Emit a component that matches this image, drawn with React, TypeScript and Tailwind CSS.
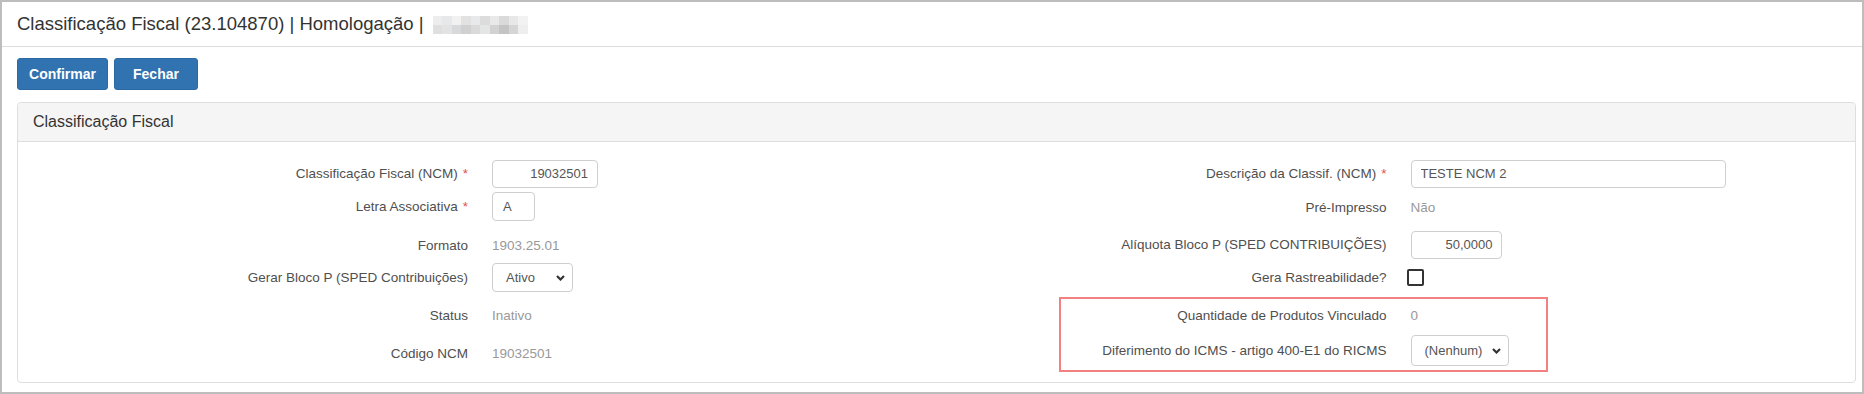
import { ReactNode } from 'react';

const blurTop = ['bg-[#ededed]', 'bg-[#e6e8e9]', 'bg-[#f1f1f1]', 'bg-[#e2e2e2]', 'bg-[#e7e9ea]', 'bg-[#dcdcdc]', 'bg-[#e9e9e9]', 'bg-[#dadada]', 'bg-[#e8e8e8]', 'bg-[#f2f2f2]'];
const blurBottom = ['bg-[#dfdfdf]', 'bg-[#e3e3e3]', 'bg-[#d7d9da]', 'bg-[#d0d0d0]', 'bg-[#dadada]', 'bg-[#e4e6e6]', 'bg-[#d2d2d2]', 'bg-[#c4c4c4]', 'bg-[#d5d5d5]', 'bg-[#eeeeee]'];

const Chevron = () => (
  <svg width="9" height="6" viewBox="0 0 9 6" className="pointer-events-none absolute right-[8px] top-1/2 -translate-y-1/2">
    <path d="M1 1l3.5 3.5L8 1" fill="none" stroke="#333" strokeWidth="2.2" />
  </svg>
);

const Req = () => <span className="ml-[5px] text-[#e0514d]">*</span>;

const Row = ({ label, children, cls }: { label: ReactNode; children: ReactNode; cls: string }) => (
  <div className={`flex items-center ${cls}`}>
    <div className="mt-[2px] w-[450px] shrink-0 text-right text-[13.5px] text-[#4f4f4f]">{label}</div>
    <div className="flex items-center pl-[24px]">{children}</div>
  </div>
);

const Value = ({ children }: { children: ReactNode }) => (
  <span className="mt-[2px] text-[13.5px] text-[#999]">{children}</span>
);

const Input = ({ value, cls }: { value: string; cls: string }) => (
  <input
    readOnly
    value={value}
    className={`rounded-[4px] border border-[#cfcfcf] bg-white text-[13px] text-[#555] outline-none ${cls}`}
  />
);

const Select = ({ value, cls }: { value: string; cls: string }) => (
  <div className="relative">
    <select
      defaultValue={value}
      className={`appearance-none rounded-[4px] border border-[#cfcfcf] bg-white pl-[13px] text-[13px] text-[#555] outline-none ${cls}`}
    >
      <option>{value}</option>
    </select>
    <Chevron />
  </div>
);

export default function App() {
  return (
    <div className="h-[394px] w-[1864px] overflow-hidden border-2 border-[#bdbdbd] bg-white font-['Liberation_Sans',Arial,sans-serif]">
      <div className="flex h-[45px] items-center border-b border-[#dcdcdc] pl-[15px]">
        <span className="text-[18.5px] text-[#333]">Classificação Fiscal (23.104870) | Homologação |</span>
        <div className="ml-[9px] mt-[1px] flex flex-col">
          <div className="flex">
            {blurTop.map((c, i) => (
              <div key={i} className={`h-[9px] w-[9.5px] ${c}`} />
            ))}
          </div>
          <div className="flex">
            {blurBottom.map((c, i) => (
              <div key={i} className={`h-[9px] w-[9.5px] ${c}`} />
            ))}
          </div>
        </div>
      </div>

      <div className="pl-[15px] pr-[6px]">
        <div className="mt-[11px] flex gap-[6px]">
          <button className="h-[32px] w-[91px] rounded-[3px] border border-[#2d6aa3] bg-[#3172b0] text-[14px] font-bold text-white">
            Confirmar
          </button>
          <button className="h-[32px] w-[84px] rounded-[3px] border border-[#2d6aa3] bg-[#3172b0] text-[14px] font-bold text-white">
            Fechar
          </button>
        </div>

        <div className="mt-[12px] h-[281px] rounded-[4px] border border-[#dcdfe2]">
          <div className="flex h-[39px] items-center rounded-t-[4px] border-b border-[#dcdfe2] bg-[#f5f5f5] pl-[15px] text-[16px] text-[#333]">
            Classificação Fiscal
          </div>

          <div className="grid grid-cols-2 pt-[17px]">
            <div className="flex flex-col">
              <Row label={<>Classificação Fiscal (NCM)<Req /></>} cls="h-[29px]">
                <Input value="19032501" cls="h-[28px] w-[106px] pr-[9px] text-right" />
              </Row>
              <Row label={<>Letra Associativa<Req /></>} cls="mt-[4px] h-[29px]">
                <Input value="A" cls="h-[29px] w-[43px] pl-[10px]" />
              </Row>
              <Row label="Formato" cls="mt-[10px] h-[29px]">
                <Value>1903.25.01</Value>
              </Row>
              <Row label="Gerar Bloco P (SPED Contribuições)" cls="mt-[3px] h-[29px]">
                <Select value="Ativo" cls="h-[29px] w-[81px]" />
              </Row>
              <Row label="Status" cls="mt-[9px] h-[29px]">
                <Value>Inativo</Value>
              </Row>
              <Row label="Código NCM" cls="mt-[9px] h-[29px]">
                <Value>19032501</Value>
              </Row>
            </div>

            <div className="flex flex-col">
              <Row label={<>Descrição da Classif. (NCM)<Req /></>} cls="h-[29px]">
                <Input value="TESTE NCM 2" cls="h-[28px] w-[315px] pl-[9px]" />
              </Row>
              <Row label="Pré-Impresso" cls="mt-[5px] h-[29px]">
                <Value>Não</Value>
              </Row>
              <Row label="Alíquota Bloco P (SPED CONTRIBUIÇÕES)" cls="mt-[8px] h-[29px]">
                <Input value="50,0000" cls="h-[28px] w-[91px] pr-[8px] text-right" />
              </Row>
              <Row label="Gera Rastreabilidade?" cls="mt-[4px] h-[29px]">
                <div className="-ml-[4px] h-[17px] w-[17px] rounded-[2px] border-2 border-[#333] bg-white" />
              </Row>
              <div className="relative mt-[5px] h-[75px] pt-[4px]">
                <div className="pointer-events-none absolute inset-y-0 left-[122px] w-[489px] border-2 border-[#f28181]" />
                <Row label="Quantidade de Produtos Vinculado" cls="h-[29px]">
                  <Value>0</Value>
                </Row>
                <Row label="Diferimento do ICMS - artigo 400-E1 do RICMS" cls="mt-[5px] h-[31px]">
                  <Select value="(Nenhum)" cls="h-[31px] w-[98px]" />
                </Row>
              </div>
            </div>
          </div>
        </div>
      </div>
    </div>
  );
}
